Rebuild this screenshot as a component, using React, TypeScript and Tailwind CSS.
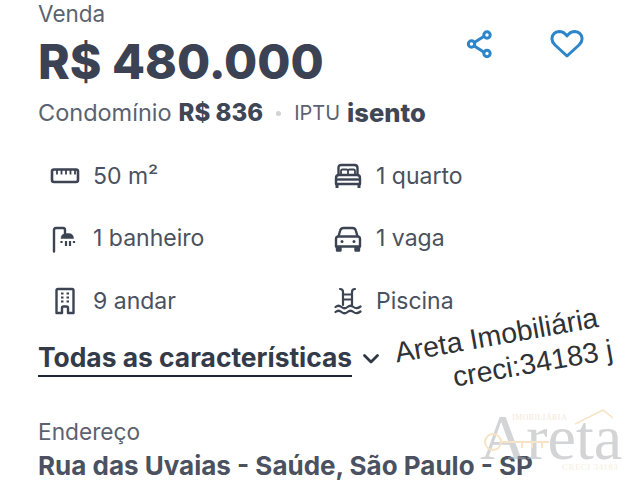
import React from 'react';

const Ruler = () => (
  <svg width="30" height="18" viewBox="0 0 30 18" fill="none" stroke="#3c4453" strokeWidth="2.600" strokeLinejoin="round">
    <rect x="2" y="2.500" width="26" height="12.500" rx="2" />
    <path d="M7 3v4.500M11.500 3v4.500M16 3v4.500M20.500 3v4.500M25 3v4.500" strokeWidth="1.800" />
  </svg>
);

const Shower = () => (
  <svg width="28" height="28" viewBox="0 0 28 28" fill="none" stroke="#3c4453">
    <path d="M3 26.500V5q0-2 2-2h7q2 0 2 2v3" strokeWidth="2.400" strokeLinecap="round" />
    <path d="M8.500 13.500q0-5 5.500-5h2q5 0 5 5z" transform="translate(1.500 0)" fill="#3c4453" strokeWidth="0.500" />
    <path d="M10.500 16v2M15 16v5M19 16v5M23 16v2" strokeWidth="2.200" />
  </svg>
);

const Building = () => (
  <svg width="22" height="28" viewBox="0 0 22 28" fill="none" stroke="#3c4453">
    <path d="M2.500 26V3.500q0-1.500 1.500-1.500h14q1.500 0 1.500 1.500V26h-5.500v-5q0-1.500-1.500-1.500h-3Q8 19.500 8 21v5z" strokeWidth="2.400" strokeLinejoin="round" />
    <path d="M7 6.500h2.500M12.500 6.500H15M7 10.500h2.500M12.500 10.500H15M7 14.500h2.500M12.500 14.500H15" strokeWidth="2.200" />
  </svg>
);

const Bed = () => (
  <svg width="28" height="26" viewBox="0 0 28 26" fill="none" stroke="#3c4453" strokeWidth="2.400" strokeLinejoin="round">
    <path d="M4.500 12V5q0-3 3-3h13q3 0 3 3v7" />
    <path d="M7 11V8q0-1.500 1.500-1.500h4Q14 6.500 14 8v3M14 11V8q0-1.500 1.500-1.500h4Q21 6.500 21 8v3" strokeWidth="1.800" />
    <path d="M2 21V15q0-3 3-3h18q3 0 3 3v6z" />
    <path d="M2 16.500h24" />
    <path d="M3 21v4M25 21v4" strokeWidth="3" />
  </svg>
);

const Car = () => (
  <svg width="28" height="26" viewBox="0 0 28 26" fill="none" stroke="#3c4453" strokeWidth="2.400" strokeLinejoin="round">
    <path d="M4.500 10.500 6 5q.7-3 3.500-3h9q2.800 0 3.500 3l1.500 5.500" />
    <path d="M2 20.500V13q0-2.500 2.500-2.500h19q2.500 0 2.500 2.500v7.500z" />
    <path d="M3 21v3.500h3.500V21M21.500 21v3.500H25V21" fill="#3c4453" />
    <circle cx="8" cy="15.500" r="1.500" fill="#3c4453" stroke="none" />
    <circle cx="20" cy="15.500" r="1.500" fill="#3c4453" stroke="none" />
  </svg>
);

const Pool = () => (
  <svg width="28" height="28" viewBox="0 0 28 28" fill="none" stroke="#3c4453" strokeWidth="2.200" strokeLinecap="round">
    <path d="M9 18V5Q9 2 6 2M18 18V5q0-3 3-3" />
    <path d="M9 7.500h9M9 12.500h9" />
    <path d="M1.500 20q3-2.500 6 0t6 0 6 0 7-.5M1.500 25q3-2.500 6 0t6 0 6 0 7-.5" />
  </svg>
);

const Chevron = () => (
  <svg width="20" height="12" viewBox="0 0 20 12" fill="none" stroke="#2f3644" strokeWidth="2.800" strokeLinecap="round" strokeLinejoin="round">
    <path d="M3.500 2.500 10 9 16.500 2.500" />
  </svg>
);

const Share = () => (
  <svg width="30" height="30" viewBox="0 0 30 30" fill="none" stroke="#2c86c9" strokeWidth="3">
    <path d="M8.500 14 19.500 7M8.500 16.500 19.500 23.500" />
    <circle cx="6.500" cy="15" r="3.200" />
    <circle cx="22" cy="6" r="3.200" />
    <circle cx="22" cy="24.500" r="3.200" />
  </svg>
);

const Heart = () => (
  <svg width="34" height="30" viewBox="0 0 34 30" fill="none" stroke="#2c86c9" strokeWidth="3" strokeLinejoin="round">
    <path d="M17 27 5 16Q1.500 12.500 2 9 3 3 9 2.500 14 2.500 17 7 20 2.500 25 2.500 31 3 32 9 32.500 12.500 29 16z" />
  </svg>
);

function Feature({ icon, label, gap }: { icon: React.ReactNode; label: string; gap: string }) {
  return (
    <div className={`flex h-[62.5px] items-center ${gap}`}>
      <div className="flex w-[30px] items-center justify-center">{icon}</div>
      <span className="text-[23px] leading-none text-[#4a5160]">{label}</span>
    </div>
  );
}

export default function App() {
  return (
    <div className="relative h-[480px] w-[640px] overflow-hidden bg-white font-['Inter','Liberation_Sans',sans-serif]">
      <div className="flex flex-col pl-[38px]">
        <div className="flex items-start">
          <div className="flex w-[427px] flex-col">
            <p className="text-[22.500px] leading-[27px] text-[#5b6270]">Venda</p>
            <h1 className="mt-[7px] text-[48px] font-extrabold leading-[56px] text-[#3a4254]">R$ 480.000</h1>
            <p className="mt-[8px] flex items-center whitespace-nowrap text-[23.500px] leading-[30px] text-[#5b6270]">
              Condomínio <b className="ml-[7px] text-[24px] font-extrabold text-[#3f4656]">R$ 836</b>
              <span className="mx-[13px] h-[5px] w-[5px] rounded-full bg-[#cfd2d6]" />
              <span className="text-[20px]">IPTU</span> <b className="ml-[7px] text-[25.500px] font-extrabold text-[#3f4656]">isento</b>
            </p>
          </div>
          <div className="mt-[29px] flex items-center gap-[55px]">
            <Share />
            <Heart />
          </div>
        </div>

        <div className="ml-[12px] mt-[17px] grid w-[500px] grid-cols-[283px_1fr]">
          <Feature icon={<Ruler />} label="50 m²" gap="gap-[13px]" />
          <Feature icon={<Bed />} label="1 quarto" gap="gap-[13px]" />
          <Feature icon={<Shower />} label="1 banheiro" gap="gap-[13px]" />
          <Feature icon={<Car />} label="1 vaga" gap="gap-[13px]" />
          <Feature icon={<Building />} label="9 andar" gap="gap-[13px]" />
          <Feature icon={<Pool />} label="Piscina" gap="gap-[13px]" />
        </div>

        <div className="mt-[8px] flex items-center gap-[9px]">
          <span className="border-b-2 border-[#1f2633] pb-[2px] text-[26.400px] font-bold leading-[32px] text-[#333b4a]">Todas as características</span>
          <Chevron />
        </div>

        <p className="mt-[41px] text-[22.700px] leading-[28px] text-[#5b6270]">Endereço</p>
        <p className="mt-[4px] whitespace-nowrap text-[26px] font-bold leading-[32px] text-[#4a5160]">Rua das Uvaias - Saúde, São Paulo - SP</p>
      </div>

      {/* texto colado por cima da foto */}
      <div className="absolute left-[392px] top-[336px] origin-top-left -rotate-[10deg] whitespace-nowrap font-['Liberation_Sans',sans-serif] text-[28.500px] leading-[34px] text-[#2f3236]">
        <div>Areta Imobiliária</div>
        <div className="ml-[53px]">creci:34183 j</div>
      </div>

      {/* marca d'agua */}
      <div className="absolute left-[482px] top-[405px] h-[70px] w-[145px] opacity-50">
        <span className="absolute left-[30px] top-[7px] font-['Liberation_Serif',serif] text-[8px] tracking-wider text-[#e8d2b0]">IMOBILIÁRIA</span>
        <span className="absolute left-[-2px] top-[-7px] font-['Liberation_Serif',serif] text-[64px] leading-[80px] text-[#a9abae]">Areta</span>
        <svg className="absolute left-0 top-[24px]" width="70" height="26" viewBox="0 0 70 26" fill="none" stroke="#f0c98c" strokeWidth="2">
          <circle cx="11" cy="13" r="8" />
          <path d="M19 13h48M40 13v6M50 13v6M60 13v6" />
        </svg>
        <svg className="absolute right-[12px] top-[4px]" width="40" height="16" viewBox="0 0 40 16" fill="none" stroke="#f0c98c" strokeWidth="1.500">
          <path d="M0 15 28 1l10 8" />
        </svg>
        <span className="absolute left-[80px] top-[56px] font-['Liberation_Serif',serif] text-[9px] tracking-wider text-[#efdfc4]">CRECI 34183</span>
      </div>
    </div>
  );
}
